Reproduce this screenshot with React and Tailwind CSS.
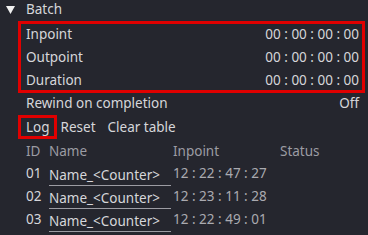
const FONT = { fontFamily: '"Noto Sans", "Open Sans", sans-serif' };

const TIMES = [
  { label: 'Inpoint', value: '00 : 00 : 00 : 00' },
  { label: 'Outpoint', value: '00 : 00 : 00 : 00' },
  { label: 'Duration', value: '00 : 00 : 00 : 00' },
];

const ROWS = [
  { id: '01', name: 'Name_<Counter>', inpoint: '12 : 22 : 47 : 27' },
  { id: '02', name: 'Name_<Counter>', inpoint: '12 : 23 : 11 : 28' },
  { id: '03', name: 'Name_<Counter>', inpoint: '12 : 22 : 49 : 01' },
];

export default function App() {
  return (
    <div className="w-[368px] h-[235px] overflow-hidden bg-[#25262e] text-[#d6d6da] text-[13.5px]" style={FONT}>
      {/* Header */}
      <div className="h-[22px] flex items-center pl-[6px]">
        <svg width="9" height="8" viewBox="0 0 9 8" className="-mt-[3px]">
          <path d="M0 0 H9 L4.5 8 Z" fill="#f0f0f0" />
        </svg>
        <span className="ml-[11px] -mt-[4px]">Batch</span>
      </div>

      {/* Timecodes (highlighted) */}
      <div className="relative pl-[26px] pr-[9px] pt-[1px]">
        <div className="absolute left-[18px] right-[3px] -top-[1px] -bottom-[1px] border-[3px] border-[#e00000]" />
        {TIMES.map(t => (
          <div key={t.label} className="h-[23px] flex items-center justify-between">
            <span>{t.label}</span>
            <span>{t.value}</span>
          </div>
        ))}
      </div>

      <div className="h-[22px] flex items-center justify-between pl-[26px] pr-[9px]">
        <span>Rewind on completion</span>
        <span>Off</span>
      </div>

      {/* Actions */}
      <div className="flex items-center pl-[26px] h-[26px]">
        <span className="relative">
          <span className="absolute -left-[8px] -right-[7px] -top-[2px] -bottom-[2px] border-[3px] border-[#e00000]" />
          Log
        </span>
        <span className="ml-[11px]">Reset</span>
        <span className="ml-[12px]">Clear table</span>
      </div>

      {/* Table */}
      <div className="pl-[26px] pr-[7px]">
        <div className="h-[22px] flex items-center text-[#9c9ca3]">
          <span className="w-[23px]">ID</span>
          <span className="w-[124px]">Name</span>
          <span className="w-[107px]">Inpoint</span>
          <span>Status</span>
        </div>
        {ROWS.map(r => (
          <div key={r.id} className="h-[23px] flex items-center">
            <span className="w-[23px]">{r.id}</span>
            <span className="w-[122px] mr-[2px] border-b border-[#9c9ca3] leading-[20px] mt-[3px]">{r.name}</span>
            <span className="w-[107px] text-[#aaaab0]">{r.inpoint}</span>
          </div>
        ))}
      </div>
    </div>
  );
}
